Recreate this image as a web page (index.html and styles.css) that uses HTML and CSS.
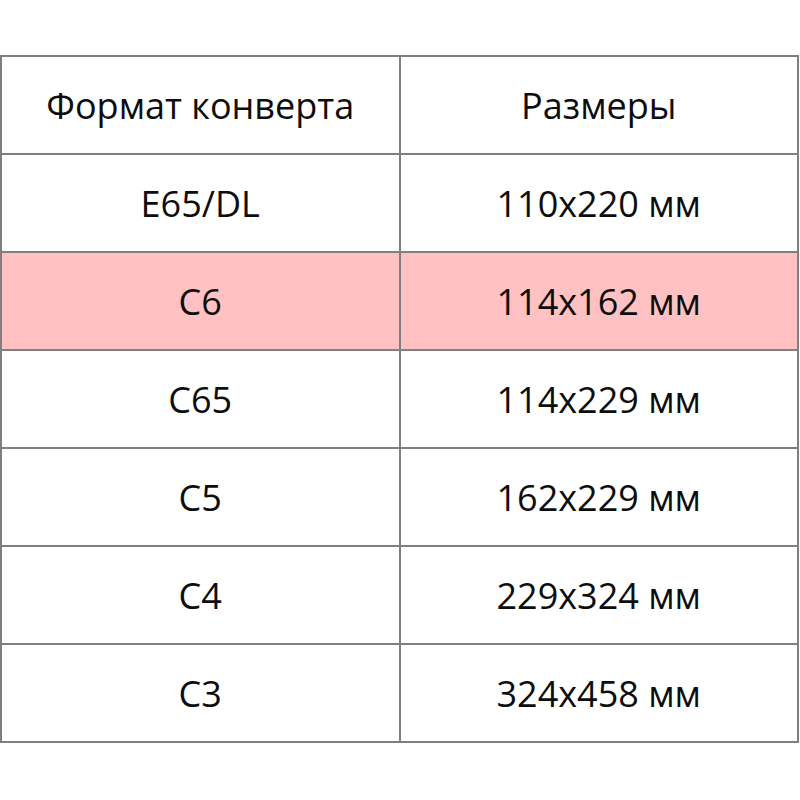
FILE: index.html
```html
<!DOCTYPE html>
<html lang="ru">
<head>
<meta charset="utf-8">
<link rel="stylesheet" href="styles.css">
</head>
<body>
<table class="formats">
  <tr class="head"><td>Формат конверта</td><td>Размеры</td></tr>
  <tr><td>E65/DL</td><td>110x220 мм</td></tr>
  <tr class="hl"><td>C6</td><td>114x162 мм</td></tr>
  <tr><td>C65</td><td>114x229 мм</td></tr>
  <tr><td>C5</td><td>162x229 мм</td></tr>
  <tr><td>C4</td><td>229x324 мм</td></tr>
  <tr><td>C3</td><td>324x458 мм</td></tr>
</table>
</body>
</html>
```

FILE: styles.css
```css
html, body {
  margin: 0;
  padding: 0;
  background: #fff;
}
.formats {
  margin-top: 55px;
  margin-left: 0;
  width: 799px;
  border-collapse: collapse;
  table-layout: fixed;
  font-family: "Open Sans", "Noto Sans", sans-serif;
  font-size: 36px;
  color: #0d0d0d;
}
.formats td {
  border: 2px solid #7f7f7f;
  height: 96px;
  padding: 0;
  text-align: center;
  vertical-align: middle;
  width: 50%;
}
.formats .hl td {
  background: #ffc1c1;
}
```
